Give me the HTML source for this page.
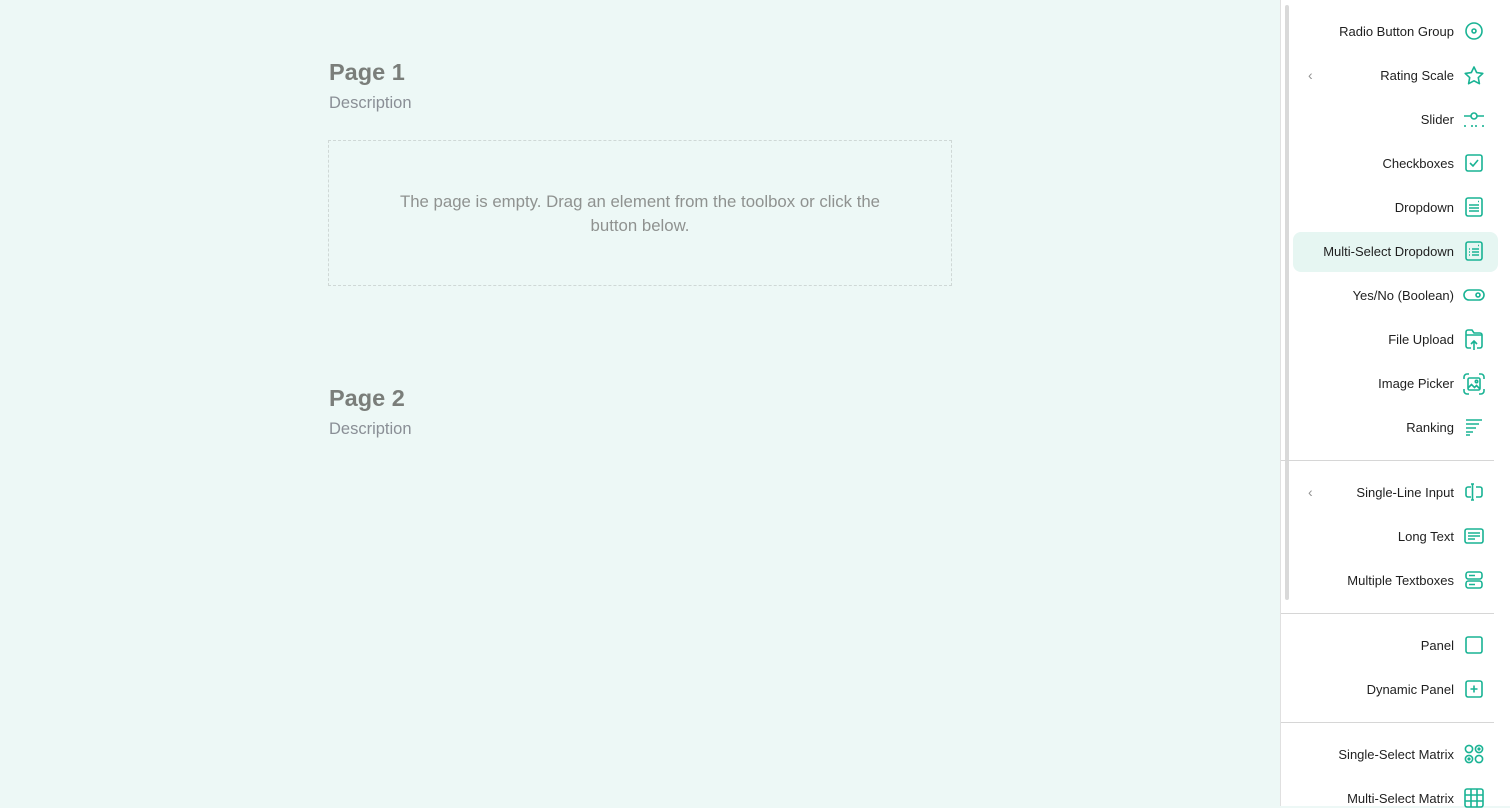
<!DOCTYPE html>
<html><head><meta charset="utf-8"><style>
*{margin:0;padding:0;box-sizing:border-box}
body{width:1510px;height:806px;overflow:hidden;background:#edf8f6;font-family:"Liberation Sans",sans-serif;position:relative}
.title{position:absolute;left:329px;font-size:23.5px;font-weight:bold;color:#7a7e7a}
.desc{position:absolute;left:329px;font-size:16.5px;color:#8a8f96}
.empty{position:absolute;left:328px;top:140px;width:624px;height:146px;border:1px dashed #cfd8d6;text-align:center;color:#8f9290;font-size:16.8px;line-height:24px;padding:49px 60px 0}
.side{position:absolute;left:1280px;top:0;width:230px;height:806px;background:#fff;border-left:1px solid #e0e0e0}
.sb{position:absolute;left:1285px;top:5px;width:4px;height:595px;background:#d9d9d9;border-radius:2px}
.sep{position:absolute;left:1281px;width:213px;height:1px;background:#d6d6d6}
.it{position:absolute;right:56px;font-size:13px;color:#1f1f1f;line-height:16px;white-space:nowrap;margin-top:1px}
.ic{position:absolute;left:1465px;width:18px;height:18px}
.ch{position:absolute;left:1308px;color:#909090;font-size:14px;margin-top:1px}
.hl{position:absolute;left:1293px;top:232px;width:205px;height:40px;background:#e6f6f2;border-radius:8px}
</style></head><body>
<div class="title" style="top:59px">Page 1</div>
<div class="desc" style="top:94px">Description</div>
<div class="empty">The page is empty. Drag an element from the toolbox or click the button below.</div>
<div class="title" style="top:385px">Page 2</div>
<div class="desc" style="top:420px">Description</div>

<div class="side"></div>
<div class="sb"></div>
<div class="hl"></div>
<div class="sep" style="top:460px"></div>
<div class="sep" style="top:613px"></div>
<div class="sep" style="top:722px"></div>
<div class="ch" style="top:66px">‹</div>
<div class="ch" style="top:483px">‹</div>

<div class="it" style="top:23px">Radio Button Group</div>
<svg class="ic" style="top:22px" viewBox="0 0 18 18" fill="none" stroke="#19b394" stroke-width="1.6"><circle cx="9" cy="9" r="8"/><circle cx="9" cy="9" r="2"/></svg>
<div class="it" style="top:67px">Rating Scale</div>
<svg class="ic" style="top:65px;width:22px;height:22px;left:1463px" viewBox="0 0 22 22" fill="none" stroke="#19b394" stroke-width="1.6" stroke-linejoin="round"><path d="M11 2l2.7 5.6 6.1.8-4.5 4.2 1.1 6.1L11 15.8l-5.4 2.9 1.1-6.1L2.2 8.4l6.1-.8z"/></svg>
<div class="it" style="top:111px">Slider</div>
<svg class="ic" style="top:110px;width:22px;left:1463px" viewBox="0 0 22 18" fill="none" stroke="#19b394" stroke-width="1.6"><path d="M1 6h7M14 6h7"/><circle cx="11" cy="6" r="3"/><path d="M2 15v2M9 15v2M13 15v2M20 15v2"/></svg>
<div class="it" style="top:155px">Checkboxes</div>
<svg class="ic" style="top:154px" viewBox="0 0 18 18" fill="none" stroke="#19b394" stroke-width="1.6"><rect x="1" y="1" width="16" height="16" rx="2"/><path d="M5 9l3 3 5-6"/></svg>
<div class="it" style="top:199px">Dropdown</div>
<svg class="ic" style="top:197px;height:20px" viewBox="0 0 18 20" fill="none" stroke="#19b394" stroke-width="1.6"><rect x="1" y="1" width="16" height="18" rx="2"/><path d="M4 8h10M4 11h10M4 14h10M13 4.5h1"/></svg>
<div class="it" style="top:243px">Multi-Select Dropdown</div>
<svg class="ic" style="top:241px;height:20px" viewBox="0 0 18 20" fill="none" stroke="#19b394" stroke-width="1.6"><rect x="1" y="1" width="16" height="18" rx="2"/><path d="M4 8h1M7 8h7M4 11h1M7 11h7M4 14h1M7 14h7M13 4.5h1"/></svg>
<div class="it" style="top:287px">Yes/No (Boolean)</div>
<svg class="ic" style="top:288px;width:22px;height:14px;left:1463px" viewBox="0 0 22 14" fill="none" stroke="#19b394" stroke-width="1.6"><rect x="1" y="2" width="20" height="10" rx="5"/><circle cx="15" cy="7" r="2"/></svg>
<div class="it" style="top:331px">File Upload</div>
<svg class="ic" style="top:329px;height:22px" viewBox="0 0 18 22" fill="none" stroke="#19b394" stroke-width="1.6"><path d="M6 19H3a2 2 0 01-2-2V3a2 2 0 012-2h4l2 3h6a2 2 0 012 2v11a2 2 0 01-2 2h-3"/><path d="M1 6h16M9 21v-9M6 15l3-3 3 3"/></svg>
<div class="it" style="top:375px">Image Picker</div>
<svg class="ic" style="top:373px;width:22px;height:22px;left:1463px" viewBox="0 0 22 22" fill="none" stroke="#19b394" stroke-width="1.6"><path d="M1 6V4a3 3 0 013-3h2M16 1h2a3 3 0 013 3v2M21 16v2a3 3 0 01-3 3h-2M6 21H4a3 3 0 01-3-3v-2"/><rect x="5" y="5" width="12" height="12" rx="1.5"/><circle cx="13.5" cy="8.5" r="1.2"/><path d="M5 15l3.5-3.5 3 3 2-2 3.5 3.5"/></svg>
<div class="it" style="top:419px">Ranking</div>
<svg class="ic" style="top:418px" viewBox="0 0 18 18" fill="none" stroke="#19b394" stroke-width="1.6"><path d="M1 2h16M1 6h13M1 10h10M1 14h7M1 17h4"/></svg>
<div class="it" style="top:484px">Single-Line Input</div>
<svg class="ic" style="top:483px" viewBox="0 0 18 18" fill="none" stroke="#19b394" stroke-width="1.6"><path d="M6 4H3a2 2 0 00-2 2v6a2 2 0 002 2h3M11 4h4a2 2 0 012 2v6a2 2 0 01-2 2h-4M6 1h3M6 17h3M7.5 1v16"/></svg>
<div class="it" style="top:528px">Long Text</div>
<svg class="ic" style="top:527px;width:20px;left:1464px" viewBox="0 0 20 18" fill="none" stroke="#19b394" stroke-width="1.6"><rect x="1" y="2" width="18" height="14" rx="2"/><path d="M4 6h12M4 9h12M4 12h7"/></svg>
<div class="it" style="top:572px">Multiple Textboxes</div>
<svg class="ic" style="top:571px" viewBox="0 0 18 18" fill="none" stroke="#19b394" stroke-width="1.6"><rect x="1" y="1" width="16" height="7" rx="2.5"/><rect x="1" y="10" width="16" height="7" rx="2.5"/><path d="M4 4.5h6M4 13.5h6"/></svg>
<div class="it" style="top:637px">Panel</div>
<svg class="ic" style="top:636px" viewBox="0 0 18 18" fill="none" stroke="#19b394" stroke-width="1.6"><rect x="1" y="1" width="16" height="16" rx="2"/></svg>
<div class="it" style="top:681px">Dynamic Panel</div>
<svg class="ic" style="top:680px" viewBox="0 0 18 18" fill="none" stroke="#19b394" stroke-width="1.6"><rect x="1" y="1" width="16" height="16" rx="2"/><path d="M9 5.5v7M5.5 9h7"/></svg>
<div class="it" style="top:746px">Single-Select Matrix</div>
<svg class="ic" style="top:744px;width:20px;height:20px;left:1464px" viewBox="0 0 20 20" fill="none" stroke="#19b394" stroke-width="1.6"><circle cx="5" cy="5" r="3.6"/><circle cx="15" cy="5" r="3.6"/><circle cx="5" cy="15" r="3.6"/><circle cx="15" cy="15" r="3.6"/><circle cx="15" cy="5" r=".8" fill="#19b394"/><circle cx="5" cy="15" r=".8" fill="#19b394"/></svg>
<div class="it" style="top:790px">Multi-Select Matrix</div>
<svg class="ic" style="top:788px;width:20px;height:20px;left:1464px" viewBox="0 0 20 20" fill="none" stroke="#19b394" stroke-width="1.6"><rect x="1" y="1" width="18" height="18" rx="2"/><path d="M7 1v18M13 1v18M1 7h18M1 13h18"/></svg>
</body></html>
